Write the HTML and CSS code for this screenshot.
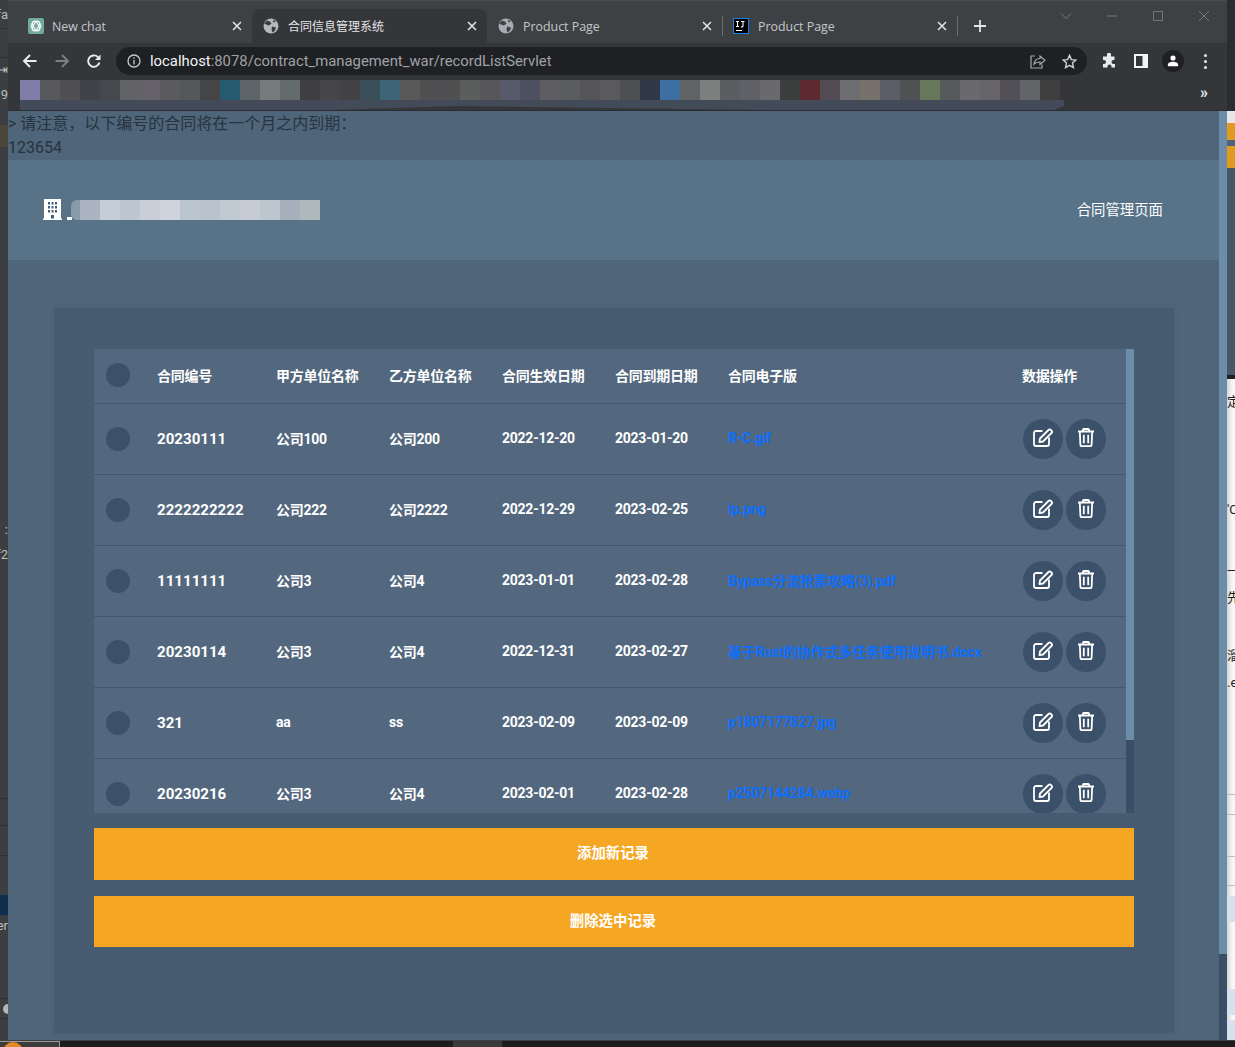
FILE: index.html
```html
<!DOCTYPE html>
<html lang="zh-CN">
<head>
<meta charset="utf-8">
<title>合同信息管理系统</title>
<link rel="stylesheet" href="styles.css">
</head>
<body>
<div class="desktop">
  <div class="bg-left">
    <span class="frag fl1">fa</span><i class="rule r28"></i><i class="rule r57"></i><span class="frag fl2">⇥</span><span class="frag fl3">9</span>
    <i class="brown"></i><span class="frag fl4">:</span><span class="frag fl5">f2</span>
    <i class="rule r798"></i><i class="rule r825"></i><i class="rule r855"></i><i class="navy"></i><span class="frag fl6">er</span><i class="rule r998"></i><i class="dot"></i><i class="rule r1018"></i>
  </div>
  <div class="window">
    <div class="tabstrip">
      <div class="tab">
        <svg class="fav" viewBox="0 0 16 16"><rect width="16" height="16" rx="2" fill="#74aa9c"/><g fill="none" stroke="#fff" stroke-width="1"><circle cx="8" cy="8" r="4.8"/><ellipse cx="8" cy="8" rx="5.4" ry="2.6" transform="rotate(60 8 8)"/><ellipse cx="8" cy="8" rx="5.4" ry="2.6" transform="rotate(-60 8 8)"/></g></svg>
        <span class="tab-title">New chat</span>
        <svg class="tab-x" viewBox="0 0 10 10"><path d="M1 1l8 8M9 1l-8 8"/></svg>
      </div>
      <div class="tab active">
        <svg class="fav" viewBox="0 0 16 16"><circle cx="8" cy="8" r="7.5" fill="#b5b8bc"/><path d="M4 2.5l3 1 1.5 2-2.5 2-3-1-2-1zM9 8.5l4 1-1 3-2.5 2-1-3zM10 1.5l3 2-2.5 1z" fill="#3a3b3f"/></svg>
        <span class="tab-title cjk">合同信息管理系统</span>
        <svg class="tab-x" viewBox="0 0 10 10"><path d="M1 1l8 8M9 1l-8 8"/></svg>
      </div>
      <div class="tab sep">
        <svg class="fav" viewBox="0 0 16 16"><circle cx="8" cy="8" r="7.5" fill="#a9acb0"/><path d="M4 2.5l3 1 1.5 2-2.5 2-3-1-2-1zM9 8.5l4 1-1 3-2.5 2-1-3zM10 1.5l3 2-2.5 1z" fill="#3f4245"/></svg>
        <span class="tab-title">Product Page</span>
        <svg class="tab-x" viewBox="0 0 10 10"><path d="M1 1l8 8M9 1l-8 8"/></svg>
      </div>
      <div class="tab sep">
        <svg class="fav" viewBox="0 0 16 16"><rect x=".5" y=".5" width="15" height="15" fill="#000" stroke="#1c7fe8"/><path d="M3 3.5h3M4.500 3.500v5M3 8.500h3M8 3.500h3.500M10 3.500v4.500q0 1-2 .8M3 12.500h6" fill="none" stroke="#fff" stroke-width="1.100"/></svg>
        <span class="tab-title">Product Page</span>
        <svg class="tab-x" viewBox="0 0 10 10"><path d="M1 1l8 8M9 1l-8 8"/></svg>
      </div>
      <svg class="newtab" viewBox="0 0 12 12"><path d="M6 0v12M0 6h12"/></svg>
      <div class="winctl">
        <svg viewBox="0 0 12 12"><path d="M1 3.500l5 5 5-5"/></svg>
        <svg viewBox="0 0 12 12"><path d="M1 6h10"/></svg>
        <svg viewBox="0 0 12 12"><path d="M1.500 1.500h9v9h-9z"/></svg>
        <svg viewBox="0 0 12 12"><path d="M1 1l10 10M11 1L1 11"/></svg>
      </div>
    </div>
    <div class="toolbar">
      <svg class="nav" viewBox="0 0 16 16"><path d="M14.500 8H2M8 2L2 8l6 6"/></svg>
      <svg class="nav dim" viewBox="0 0 16 16"><path d="M1.500 8H14M8 2l6 6-6 6"/></svg>
      <svg class="nav" viewBox="0 0 16 16"><path d="M13.400 9.500A5.700 5.700 0 1 1 12 4.200"/><path class="solid" d="M14.500 1.500v5.500H9z"/></svg>
      <div class="omnibox">
        <svg class="info" viewBox="0 0 14 14"><circle cx="7" cy="7" r="6"/><path d="M7 6v4.500M7 3.300v1.500"/></svg>
        <div class="url"><b>localhost</b>:8078/contract_management_war/recordListServlet</div>
        <svg class="share" viewBox="0 0 16 16"><path d="M5 3H1v12h11v-3.500"/><path d="M4 11c.5-4 3-5.500 6-5.500V3l5 4.300-5 4.200V9c-2.500 0-4.500.5-6 2z"/></svg>
        <svg class="star" viewBox="0 0 16 16"><path d="M8 1.500l2 4.500 4.800.5-3.600 3.200 1 4.800L8 12.100l-4.200 2.400 1-4.800L1.200 6.500 6 6z"/></svg>
      </div>
      <svg class="puzzle" viewBox="0 0 16 16"><path d="M6 1.500a2 2 0 0 1 4 0V3.500h3.500V7h-1a2 2 0 0 0 0 4h1.500v3.500H10.500v-1a2 2 0 0 0-4 0v1H2V11h1a2 2 0 0 0 0-4H2V3.500h4z" fill="#e8eaed"/></svg>
      <svg class="panel" viewBox="0 0 14 14"><path fill-rule="evenodd" d="M0 0h14v14H0zM2 2v10h6.500V2z" fill="#f1f3f4"/></svg>
      <div class="avatar"><svg viewBox="0 0 14 14"><circle cx="7" cy="3.500" r="3" fill="#fff"/><path d="M1 13v-1.500C1 9 4 8 7 8s6 1 6 3.500V13z" fill="#fff"/></svg></div>
      <div class="kebab"><i></i><i></i><i></i></div>
    </div>
    <div class="bookmarks">
      <div class="mosaic"><div class="mosaic-tiles"></div><div class="mosaic-band"></div></div>
      <span class="chev">»</span>
    </div>
    <div class="viewport">
      <div class="page">
        <div class="notice">&gt; 请注意，以下编号的合同将在一个月之内到期：<br>123654</div>
        <header class="site-header">
          <div class="brand">
            <svg class="building" viewBox="0 0 19 21"><path d="M1 0h17v19.500h1V21H0v-1.500h1z" fill="#fff"/><g fill="#3f5f7d"><rect x="5" y="3" width="2" height="2.500"/><rect x="8.500" y="3" width="2" height="2.500"/><rect x="12" y="3" width="2" height="2.500"/><rect x="5" y="7" width="2" height="2.500"/><rect x="8.500" y="7" width="2" height="2.500"/><rect x="12" y="7" width="2" height="2.500"/><rect x="5" y="11" width="2" height="2.500"/><rect x="8.500" y="11" width="2" height="2.500"/><rect x="12" y="11" width="2" height="2.500"/><rect x="8" y="16" width="3" height="3.500"/></g></svg>
            <i class="brand-dot"></i>
            <div class="brand-blur"></div>
          </div>
          <div class="page-name">合同管理页面</div>
        </header>
        <main class="main">
          <section class="panel-card">
            <div class="table-box">
              <div class="table-scroll">
                <table class="records">
                  <colgroup><col class="c0"><col class="c1"><col class="c2"><col class="c2"><col class="c2"><col class="c2"><col class="c6"><col></colgroup>
                  <thead>
                    <tr><th><i class="check"></i></th><th>合同编号</th><th>甲方单位名称</th><th>乙方单位名称</th><th>合同生效日期</th><th>合同到期日期</th><th>合同电子版</th><th>数据操作</th></tr>
                  </thead>
                  <tbody>
                    <tr><td><i class="check"></i></td><td>20230111</td><td>公司100</td><td>公司200</td><td>2022-12-20</td><td>2023-01-20</td><td><a href="#">R-C.gif</a></td><td><div class="ops"><button class="op"><svg viewBox="0 0 20 19"><use href="#edit"/></svg></button><button class="op"><svg viewBox="0 0 20 19"><use href="#trash"/></svg></button></div></td></tr>
                    <tr><td><i class="check"></i></td><td>2222222222</td><td>公司222</td><td>公司2222</td><td>2022-12-29</td><td>2023-02-25</td><td><a href="#">ip.png</a></td><td><div class="ops"><button class="op"><svg viewBox="0 0 20 19"><use href="#edit"/></svg></button><button class="op"><svg viewBox="0 0 20 19"><use href="#trash"/></svg></button></div></td></tr>
                    <tr><td><i class="check"></i></td><td>11111111</td><td>公司3</td><td>公司4</td><td>2023-01-01</td><td>2023-02-28</td><td><a href="#">Bypass分流抢票攻略(3).pdf</a></td><td><div class="ops"><button class="op"><svg viewBox="0 0 20 19"><use href="#edit"/></svg></button><button class="op"><svg viewBox="0 0 20 19"><use href="#trash"/></svg></button></div></td></tr>
                    <tr><td><i class="check"></i></td><td>20230114</td><td>公司3</td><td>公司4</td><td>2022-12-31</td><td>2023-02-27</td><td><a href="#">基于Rust的协作式多任务使用说明书.docx</a></td><td><div class="ops"><button class="op"><svg viewBox="0 0 20 19"><use href="#edit"/></svg></button><button class="op"><svg viewBox="0 0 20 19"><use href="#trash"/></svg></button></div></td></tr>
                    <tr><td><i class="check"></i></td><td>321</td><td>aa</td><td>ss</td><td>2023-02-09</td><td>2023-02-09</td><td><a href="#">p1807177827.jpg</a></td><td><div class="ops"><button class="op"><svg viewBox="0 0 20 19"><use href="#edit"/></svg></button><button class="op"><svg viewBox="0 0 20 19"><use href="#trash"/></svg></button></div></td></tr>
                    <tr><td><i class="check"></i></td><td>20230216</td><td>公司3</td><td>公司4</td><td>2023-02-01</td><td>2023-02-28</td><td><a href="#">p2507144284.webp</a></td><td><div class="ops"><button class="op"><svg viewBox="0 0 20 19"><use href="#edit"/></svg></button><button class="op"><svg viewBox="0 0 20 19"><use href="#trash"/></svg></button></div></td></tr>
                  </tbody>
                </table>
              </div>
              <div class="inner-bar"><div class="inner-thumb"></div></div>
            </div>
            <button class="action first">添加新记录</button>
            <button class="action second">删除选中记录</button>
          </section>
        </main>
      </div>
      <div class="page-bar"><div class="page-thumb"></div></div>
    </div>
  </div>
  <div class="bg-right">
    <i class="rs light"></i><i class="rs orange o1"></i><i class="rs slate1"></i><i class="rs orange o2"></i><i class="rs slate2"></i><i class="rs black"></i>
    <span class="frag fr1">定</span><span class="frag fr2">'C</span><span class="frag fr3">一</span><span class="frag fr4">先</span><span class="frag fr5">溜</span><span class="frag fr6">.e</span>
    <i class="hl h794"></i><i class="hl h814"></i><i class="hl h856"></i><i class="hl h885"></i>
    <i class="pale p896"></i><i class="pale p989"></i><i class="pale p1020"></i>
  </div>
  <div class="taskbar"><div class="start"><i></i></div><div class="task-on"></div></div>
</div>
<svg class="defs" aria-hidden="true">
  <symbol id="edit" viewBox="0 0 20 19">
    <path d="M9.500 3H3a2 2 0 0 0-2 2v11a2 2 0 0 0 2 2h11a2 2 0 0 0 2-2V9.500" fill="none" stroke="#fff" stroke-width="1.800"/>
    <path d="M7 10.500L15.500 2a1.700 1.700 0 0 1 2.400 0l.6.600a1.700 1.700 0 0 1 0 2.400L10 13.500l-3.600.7z" fill="none" stroke="#fff" stroke-width="1.800" stroke-linejoin="round"/>
  </symbol>
  <symbol id="trash" viewBox="0 0 20 19">
    <path d="M2 3.500h16M7 3.500V1.800q0-.8.800-.8h4.400q.8 0 .8.800v1.700M3.800 3.500l.6 13.500q.1 1.200 1.300 1.200h8.600q1.200 0 1.300-1.200l.6-13.500M7.800 6.800v8.500M12.200 6.800v8.500" fill="none" stroke="#fff" stroke-width="1.800"/>
  </symbol>
</svg>
</body>
</html>
```
FILE: styles.css
```css
* { box-sizing: border-box; }
html, body { margin: 0; height: 100%; overflow: hidden; }
body { font-family: Roboto, "Noto Sans CJK SC", sans-serif; background: #1c1c1c; }
i { display: block; }
.defs { position: absolute; width: 0; height: 0; }

.desktop { position: relative; display: grid; grid-template-columns: 8px 1219px 8px; grid-template-rows: 1040px 7px; width: 1235px; height: 1047px; overflow: hidden; }

/* background windows peeking out */
.bg-left { position: relative; background: #3c3f41; overflow: hidden; }
.bg-right { position: relative; background: linear-gradient(90deg, #d5d5d5, #f4f4f4 60%, #fafafa); overflow: hidden; }
.frag { position: absolute; font-size: 13px; line-height: 16px; white-space: nowrap; }
.bg-left .frag { color: #b9bcbf; right: 0; }
.bg-right .frag { color: #222; left: 0; }
.fl1 { top: 7px; }
.fl2 { top: 62px; }
.fl3 { top: 87px; }
.fl4 { top: 522px; }
.fl5 { top: 547px; }
.fl6 { top: 918px; }
.fr1 { top: 394px; }
.fr2 { top: 502px; }
.fr3 { top: 563px; }
.fr4 { top: 590px; }
.fr5 { top: 648px; }
.fr6 { top: 675px; }
.rule { position: absolute; left: 0; width: 8px; height: 1px; background: #2f3133; }
.r28 { top: 28px; }
.r57 { top: 57px; }
.r798 { top: 798px; }
.r825 { top: 825px; }
.r855 { top: 855px; }
.r998 { top: 998px; }
.r1018 { top: 1018px; }
.brown { position: absolute; top: 125px; left: 0; width: 8px; height: 22px; background: #4a463c; }
.navy { position: absolute; top: 895px; left: 0; width: 8px; height: 20px; background: #0d2f4b; }
.dot { position: absolute; top: 1004px; left: 3px; width: 10px; height: 10px; border-radius: 50%; background: #b5b5b5; }
.rs { position: absolute; left: 0; width: 8px; }
.light { top: 111px; height: 12px; background: #e6e6e6; }
.orange { background: #e29a21; }
.o1 { top: 123px; height: 17px; }
.slate1 { top: 140px; height: 6px; background: #4c6378; }
.o2 { top: 146px; height: 22px; }
.slate2 { top: 168px; height: 207px; background: #45586b; }
.black { top: 375px; height: 4px; background: #202020; }
.bg-right::before { content: ""; position: absolute; left: 0; top: 0; width: 8px; height: 111px; background: #2b2c2f; }
.hl { position: absolute; left: 0; width: 8px; height: 1px; background: #bdbdbd; }
.h794 { top: 794px; }
.h814 { top: 814px; }
.h856 { top: 856px; }
.h885 { top: 885px; }
.pale { position: absolute; left: 0; width: 8px; background: #d6e1ed; }
.p896 { top: 896px; height: 26px; }
.p989 { top: 989px; height: 26px; }
.p1020 { top: 1020px; height: 20px; }
.taskbar { grid-column: 1 / -1; position: relative; background: #1c1c1c; border-top: 1px solid #3e4042; }
.start { position: absolute; left: 0; top: 0; width: 60px; height: 6px; background: #3c3c3c; box-shadow: inset 0 1px 0 #999, inset -1px 0 0 #999; overflow: hidden; }
.start i { width: 20px; height: 20px; margin: 1px 0 0 3px; border-radius: 50%; background: #e8862a; }
.task-on { position: absolute; left: 453px; top: 0; width: 49px; height: 6px; background: #3a3a3a; }

/* browser chrome */
.window { display: flex; flex-direction: column; min-width: 0; height: 1040px; background: #35363a; }
.tabstrip { position: relative; display: flex; align-items: flex-end; height: 43px; padding-left: 9px; background: #3e4144; border-top: 1px solid #4a4d50; flex: none; }
.tab { position: relative; display: flex; align-items: center; width: 235px; height: 34px; padding: 0 10px 0 11px; color: #c4c7ca; font-size: 12.400px; flex: none; }
.tab.active { background: #35363a; border-radius: 8px 8px 0 0; color: #e3e5e7; }
.tab.sep::after { content: ""; position: absolute; right: -1px; top: 7px; width: 1px; height: 20px; background: #6b6e71; }
.fav { width: 16px; height: 16px; flex: none; margin-right: 8px; }
.tab + .tab .fav { margin-right: 9px; }
.tab-title { flex: 1; white-space: nowrap; overflow: hidden; font-family: "Open Sans", "Noto Sans CJK SC", sans-serif; }
.tab-title.cjk { font-size: 12px; }
.tab-x { width: 10px; height: 10px; flex: none; fill: none; stroke: #dfe1e3; stroke-width: 1.600; }
.newtab { width: 12px; height: 12px; margin: 0 0 11px 17px; fill: none; stroke: #e3e5e7; stroke-width: 1.800; flex: none; }
.winctl { position: absolute; top: 9px; right: 17px; display: flex; gap: 34px; }
.winctl svg { width: 12px; height: 12px; fill: none; stroke: #74787c; stroke-width: 1; }

.toolbar { display: flex; align-items: center; height: 37px; padding: 0 0 1px 14px; background: #35363a; flex: none; }
.nav { width: 16px; height: 16px; margin-right: 16px; fill: none; stroke: #eceef0; stroke-width: 1.900; flex: none; }
.nav.dim { stroke: #7c7f83; }
.nav .solid { fill: #eceef0; stroke: none; }
.nav:nth-child(3) { margin-right: 14px; }
.omnibox { display: flex; align-items: center; width: 971px; height: 28px; padding: 0 10px 0 11px; border-radius: 14px; background: #1f2023; flex: none; }
.info { width: 14px; height: 14px; margin-right: 9px; fill: none; stroke: #c6c9cc; stroke-width: 1.300; flex: none; }
.url { flex: 1; color: #9fa3a7; font-size: 14.850px; white-space: nowrap; }
.url b { color: #f1f3f4; font-weight: 400; }
.share { width: 16px; height: 16px; margin-right: 16px; fill: none; stroke: #a6a9ac; stroke-width: 1.200; flex: none; }
.star { width: 15px; height: 15px; fill: none; stroke: #cfd2d5; stroke-width: 1.500; flex: none; }
.puzzle { width: 16px; height: 16px; margin-left: 14px; flex: none; }
.panel { width: 14px; height: 14px; margin-left: 17px; flex: none; }
.avatar { display: flex; align-items: center; justify-content: center; width: 22px; height: 22px; margin-left: 14px; border-radius: 50%; background: #1f2023; flex: none; }
.avatar svg { width: 12px; height: 12px; }
.kebab { display: flex; flex-direction: column; gap: 3px; margin-left: 20px; }
.kebab i { width: 3px; height: 3px; border-radius: 50%; background: #e8eaed; }

.bookmarks { position: relative; height: 31px; padding-left: 12px; background: #35363a; flex: none; border-bottom: 1px solid #2c2d30; }
.mosaic { width: 1040px; }
.mosaic-tiles { width: 1040px; height: 20px; background: linear-gradient(90deg, #807da8 0 20px, #58595c 20px 40px, #505052 40px 60px, #424349 60px 80px, #47474e 80px 100px, #626367 100px 120px, #656369 120px 140px, #5b5b5e 140px 160px, #54585a 160px 180px, #454547 180px 200px, #265a70 200px 220px, #5c6468 220px 240px, #757a7a 240px 260px, #646b6b 260px 280px, #3f3f41 280px 300px, #464649 300px 320px, #434346 320px 340px, #395059 340px 360px, #3e6575 360px 380px, #595959 380px 400px, #505053 400px 420px, #505052 420px 440px, #5c5e5e 440px 460px, #575759 460px 480px, #565a6b 480px 500px, #4d5060 500px 520px, #5e5e62 520px 540px, #5a5c5e 540px 560px, #555558 560px 580px, #5a5a5c 580px 600px, #4e4f51 600px 620px, #2f3946 620px 640px, #3d6fa3 640px 660px, #606265 660px 680px, #7b7f7d 680px 700px, #5b5d60 700px 720px, #606166 720px 740px, #6a6a6e 740px 760px, #3c3d3d 760px 780px, #5e2a2f 780px 800px, #544b54 800px 820px, #6d6d72 820px 840px, #76716b 840px 860px, #5d5d68 860px 880px, #505153 880px 900px, #66775a 900px 920px, #57595b 920px 940px, #69696e 940px 960px, #68656a 960px 980px, #525056 980px 1000px, #636468 1000px 1020px, #3f3f3f 1020px 1040px); }
.mosaic-band { width: 1044px; height: 10px; background: #424b57; clip-path: polygon(0 0, 100% 0, 100% 60%, 99% 100%, 72% 100%, 42% 60%, 30% 100%, 0 100%); }
.chev { position: absolute; left: 1192px; top: 3px; color: #e8eaed; font-size: 16px; line-height: 20px; font-weight: 700; }

/* page */
.viewport { display: flex; flex: 1; min-height: 0; }
.page { flex: 1; min-width: 0; overflow: hidden; background: #4f6579; }
.notice { height: 49px; padding-top: 1px; color: #263340; font-size: 16px; line-height: 24px; }
.site-header { display: flex; align-items: center; justify-content: space-between; height: 100px; padding: 0 56px 0 35px; background: #587287; }
.brand { display: flex; align-items: flex-end; padding-bottom: 2px; }
.building { width: 19px; height: 21px; flex: none; }
.brand-dot { width: 5px; height: 3px; margin-left: 5px; background: #fff; flex: none; }
.brand-blur { width: 249px; height: 20px; margin-left: -1px; border-radius: 6px 0 0 6px; background: linear-gradient(90deg, #8a9aab 0 9px, #a9b4c0 9px 29px, #c6ccd8 29px 49px, #bec6d2 49px 69px, #c9ced9 69px 89px, #cfd3de 89px 109px, #bac5cf 109px 129px, #b8c3cd 129px 149px, #c0cad3 149px 169px, #c5ccd6 169px 189px, #bcc6ce 189px 209px, #a5b0bc 209px 229px, #aeb9be 229px 249px); }
.page-name { padding-bottom: 4px; color: #fff; font-size: 14.400px; }
.main { padding: 48px 45px 0 46px; }
.panel-card { height: 725px; padding: 41px 40px 0; background: #475c70; box-shadow: 0 0 4px rgba(60, 80, 100, .25); }
.table-box { display: flex; height: 464px; }
.table-scroll { flex: 1; min-width: 0; overflow: hidden; background: #53687e; }
.inner-bar { width: 8px; background: #3a4f66; flex: none; }
.inner-thumb { height: 391px; background: #6d8ca8; }
.records { width: 100%; border-collapse: collapse; table-layout: fixed; color: #fff; font-size: 14px; font-weight: 700; letter-spacing: -.25px; }
.c0 { width: 63px; }
.c1 { width: 119px; }
.c2 { width: 113px; }
.c6 { width: 295px; }
.records th { height: 54px; padding: 0 0 2px; text-align: left; font-weight: 700; border-bottom: 1px solid #425870; }
.records th:last-child { text-indent: -1px; }
.records td { height: 71px; padding: 0; border-bottom: 1px solid #425870; white-space: nowrap; }
.records td:nth-child(2) { font-size: 15.100px; letter-spacing: 0; }
.records td:nth-child(n+3):nth-child(-n+4) { padding-bottom: 2px; }
.records td:nth-child(n+5):nth-child(-n+7) { padding-bottom: 1px; }
.records th:first-child, .records td:first-child { padding-left: 12px; }
.records a { color: #0d6efd; text-decoration: none; }
.check { width: 24px; height: 24px; border-radius: 50%; background: #3b5069; }
.ops { display: flex; gap: 3px; align-items: center; }
.op { display: flex; align-items: center; justify-content: center; width: 40px; height: 40px; padding: 0; border: 0; border-radius: 50%; background: #3b5069; }
.op svg { width: 20px; height: 19px; margin-top: -2px; }
.action { display: block; width: 100%; height: 52px; padding: 0 2px 4px 0; border: 0; background: #f5a623; color: #fff; font-family: inherit; font-size: 14.400px; font-weight: 700; }
.first { margin-top: 15px; padding-bottom: 5px; }
.second { height: 51px; margin-top: 16px; }
.page-bar { width: 8px; background: #3a4f66; flex: none; }
.page-thumb { height: 843px; background: #6d8ca8; }
```
